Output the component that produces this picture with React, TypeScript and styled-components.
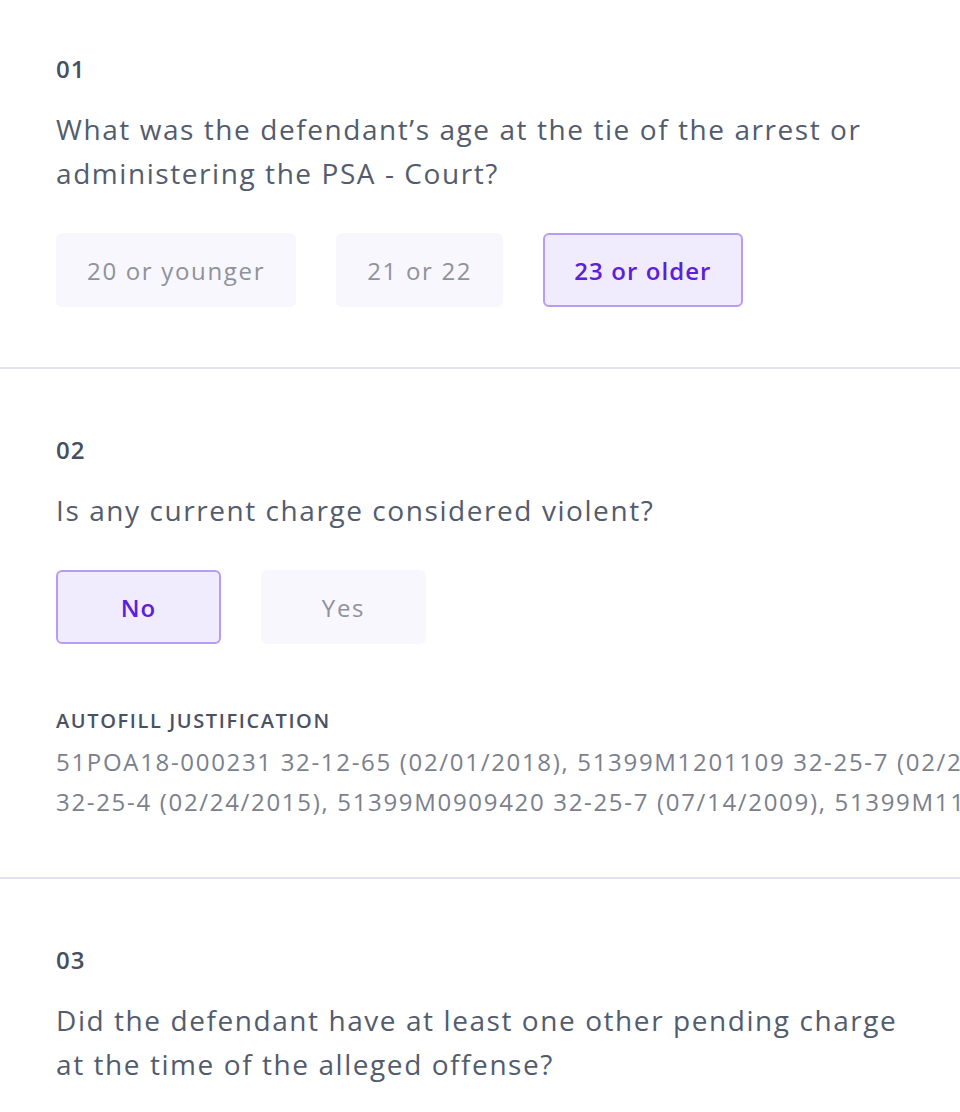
import React, { useState } from 'react';
import styled, { createGlobalStyle } from 'styled-components';

const GlobalStyle = createGlobalStyle`
  html, body {
    margin: 0;
    padding: 0;
    background: #ffffff;
    overflow-x: hidden;
  }
  body {
    font-family: 'Open Sans', 'Noto Sans', sans-serif;
  }
`;

interface Question {
  id: string;
  text: React.ReactNode;
  options: string[];
  selected?: string;
  justification?: string[];
}

const questions: Question[] = [
  {
    id: '01',
    text: (
      <>
        What was the defendant’s age at the tie of the arrest or
        <br />
        administering the PSA - Court?
      </>
    ),
    options: ['20 or younger', '21 or 22', '23 or older'],
    selected: '23 or older',
  },
  {
    id: '02',
    text: 'Is any current charge considered violent?',
    options: ['No', 'Yes'],
    selected: 'No',
    justification: [
      '51POA18-000231 32-12-65 (02/01/2018), 51399M1201109 32-25-7 (02/21/2012), 51399M1501022',
      '32-25-4 (02/24/2015), 51399M0909420 32-25-7 (07/14/2009), 51399M1101764 32-25-7 (03/02/2011)',
    ],
  },
  {
    id: '03',
    text: (
      <>
        Did the defendant have at least one other pending charge
        <br />
        at the time of the alleged offense?
      </>
    ),
    options: [],
  },
];

export default function App() {
  const [answers, setAnswers] = useState<Record<string, string | undefined>>(() =>
    Object.fromEntries(questions.map(q => [q.id, q.selected]))
  );

  return (
    <Page>
      <GlobalStyle />
      {questions.map((q, i) => (
        <Section
          key={q.id}
          $first={i === 0}
          $last={i === questions.length - 1}
          $withNotes={!!q.justification}
        >
          <Number>{q.id}</Number>
          <QuestionText>{q.text}</QuestionText>
          {q.options.length > 0 && (
            <Options>
              {q.options.map(opt => (
                <OptionButton
                  key={opt}
                  $selected={answers[q.id] === opt}
                  onClick={() => setAnswers({ ...answers, [q.id]: opt })}
                >
                  {opt}
                </OptionButton>
              ))}
            </Options>
          )}
          {q.justification && (
            <Justification>
              <JustificationTitle>Autofill Justification</JustificationTitle>
              {q.justification.map(line => (
                <JustificationLine key={line}>{line}</JustificationLine>
              ))}
            </Justification>
          )}
        </Section>
      ))}
    </Page>
  );
}

const Page = styled.div`
  width: 960px;
  overflow: hidden;
`;

const Section = styled.section<{ $first: boolean; $last: boolean; $withNotes: boolean }>`
  padding-top: ${({ $first }) => ($first ? '53px' : '65px')};
  padding-left: 56px;
  padding-right: 56px;
  padding-bottom: ${({ $withNotes }) => ($withNotes ? '55px' : '60px')};
  border-bottom: ${({ $last }) => ($last ? 'none' : '2px solid #e4e2ef')};
`;

const Number = styled.div`
  font-size: 24px;
  line-height: 32px;
  font-weight: 600;
  color: #474f5f;
  letter-spacing: 0.04em;
`;

const QuestionText = styled.div`
  margin-top: 22px;
  font-size: 28px;
  line-height: 44px;
  color: #535c6d;
  letter-spacing: 0.056em;
  white-space: nowrap;
`;

const Options = styled.div`
  display: flex;
  gap: 40px;
  margin-top: 38px;
`;

const OptionButton = styled.button<{ $selected: boolean }>`
  box-sizing: border-box;
  height: 74px;
  min-width: 165px;
  padding: 0 29px;
  border-radius: 6px;
  border: 2px solid ${({ $selected }) => ($selected ? '#b69cf5' : '#f8f7fd')};
  background: ${({ $selected }) => ($selected ? '#f1ecfd' : '#f8f7fd')};
  color: ${({ $selected }) => ($selected ? '#5b20da' : '#8e929b')};
  font-family: 'Open Sans', 'Noto Sans', sans-serif;
  font-size: 24px;
  letter-spacing: ${({ $selected }) => ($selected ? '0.045em' : '0.07em')};
  font-weight: ${({ $selected }) => ($selected ? 600 : 400)};
  cursor: pointer;
`;

const Justification = styled.div`
  margin-top: 61px;
`;

const JustificationTitle = styled.div`
  font-size: 20px;
  line-height: 32px;
  font-weight: 600;
  text-transform: uppercase;
  color: #4a5262;
  letter-spacing: 0.08em;
  margin-bottom: 5px;
`;

const JustificationLine = styled.div`
  font-size: 24px;
  line-height: 40px;
  color: #7b808b;
  letter-spacing: 0.07em;
  white-space: nowrap;
`;
